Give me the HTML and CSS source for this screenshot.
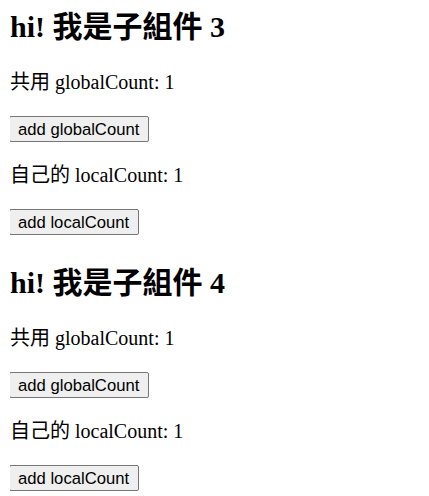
FILE: index.html
```html
<!DOCTYPE html>
<html>
<head>
<meta charset="utf-8">
<link rel="stylesheet" href="styles.css">
</head>
<body class="page">
<div class="child">
  <h2 class="title first">hi! 我是子組件 3</h2>
  <p class="line">共用 globalCount: 1</p>
  <button class="btn">add globalCount</button>
  <p class="line">自己的 localCount: 1</p>
  <button class="btn">add localCount</button>
</div>
<div class="child">
  <h2 class="title">hi! 我是子組件 4</h2>
  <p class="line">共用 globalCount: 1</p>
  <button class="btn">add globalCount</button>
  <p class="line">自己的 localCount: 1</p>
  <button class="btn">add localCount</button>
</div>
</body>
</html>
```

FILE: styles.css
```css
.page {
  margin: 10px;
  font-family: "Liberation Serif", "Noto Sans CJK TC", serif;
  font-size: 20px;
  line-height: 26px;
  color: #000;
  background: #fff;
}
.child {
  line-height: 26px;
}
.title {
  font-size: 30px;
  line-height: 34px;
  font-weight: bold;
  margin: 31px 0 25px;
}
.title.first {
  margin-top: 0;
}
.line {
  line-height: 27px;
  margin: 20px 0;
}
.btn {
  display: block;
  font-family: "Liberation Sans", Arial, sans-serif;
  font-size: 16.667px;
  line-height: 19px;
  height: 26px;
  padding: 2px 9px 2px 8px;
  margin-left: -1px;
  border: 1px solid #767676;
  border-radius: 2px;
  background: #efefef;
  color: #000;
}
```
